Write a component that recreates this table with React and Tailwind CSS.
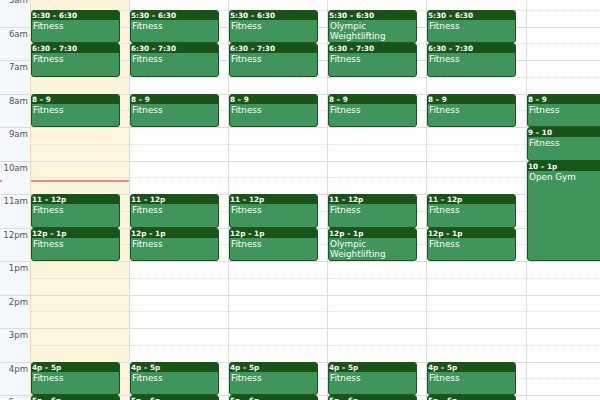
import React from 'react'

const HOUR = 33.5
const START = 5
const END = 18

const fitnessDay = [
  { s: 5.5, e: 6.5, time: '5:30 – 6:30', title: 'Fitness' },
  { s: 6.5, e: 7.5, time: '6:30 – 7:30', title: 'Fitness' },
  { s: 8, e: 9, time: '8 – 9', title: 'Fitness' },
  { s: 11, e: 12, time: '11 – 12p', title: 'Fitness' },
  { s: 12, e: 13, time: '12p – 1p', title: 'Fitness' },
  { s: 16, e: 17, time: '4p – 5p', title: 'Fitness' },
  { s: 17, e: 18, time: '5p – 6p', title: 'Fitness' },
]

const liftDay = fitnessDay.map((ev) =>
  ev.s === 5.5 || ev.s === 12 ? { ...ev, title: 'Olympic Weightlifting' } : ev
)

const saturday = [
  { s: 8, e: 9, time: '8 – 9', title: 'Fitness' },
  { s: 9, e: 10, time: '9 – 10', title: 'Fitness' },
  { s: 10, e: 13, time: '10 – 1p', title: 'Open Gym' },
]

const days = [
  { events: fitnessDay, today: true, w: 'w-[99px]' },
  { events: fitnessDay, w: 'w-[99px]' },
  { events: fitnessDay, w: 'w-[99px]' },
  { events: liftDay, w: 'w-[99px]' },
  { events: fitnessDay, w: 'w-[100px]' },
  { events: saturday, w: 'w-[99px]' },
]

const hours = []
for (let h = START; h < END; h++) hours.push(h)

function label(h) {
  if (h === 12) return '12pm'
  return h < 12 ? `${h}am` : `${h - 12}pm`
}

function Slots() {
  return hours.map((h) => (
    <React.Fragment key={h}>
      <div className="h-[16.75px] border-t border-[#dddddd]" />
      <div className="h-[16.75px] border-t border-dotted border-[#dddddd]" />
    </React.Fragment>
  ))
}

function Event({ ev }) {
  return (
    <div
      className="absolute left-0 w-[89px] overflow-hidden rounded-[3px] border border-[#1a551a] bg-[#40955c] text-white"
      style={{ top: (ev.s - START) * HOUR, height: (ev.e - ev.s) * HOUR }}
    >
      <div className="h-[9px] bg-[#175416] text-[7.3px] font-bold leading-[9px] whitespace-nowrap">
        {ev.time}
      </div>
      <div className="pl-[1px] pt-[1px] text-[8.8px] leading-[10px]">{ev.title}</div>
    </div>
  )
}

export default function App() {
  return (
    <div className="h-[400px] w-[600px] overflow-hidden bg-white font-['DejaVu_Sans',Verdana,sans-serif]">
      <div className="mt-[-7px] flex">
        {/* time axis */}
        <div className="relative w-[30px] shrink-0 bg-[#f4f7fb]">
          {hours.map((h) => (
            <React.Fragment key={h}>
              <div className="h-[16.75px] border-t border-[#dddddd] pr-[2px] pt-[1px] text-right text-[8.6px] leading-[10px] text-[#555555]">
                {label(h)}
              </div>
              <div className="h-[16.75px]" />
            </React.Fragment>
          ))}
          <div className="absolute left-0 top-[187px] h-[2px] w-[2px] bg-[#f08a7a]" />
        </div>

        {days.map((d, i) => (
          <div
            key={i}
            className={`relative shrink-0 border-l ${d.w} ${
              d.today ? 'border-[#f3dca0] bg-[#fdf6dc]' : 'border-[#dddddd] bg-white'
            }`}
          >
            <Slots />
            {d.today && <div className="absolute left-0 right-0 top-[187px] h-[2px] bg-[#f08a7a]" />}
            {d.events.map((ev, j) => (
              <Event key={j} ev={ev} />
            ))}
          </div>
        ))}
      </div>
    </div>
  )
}
